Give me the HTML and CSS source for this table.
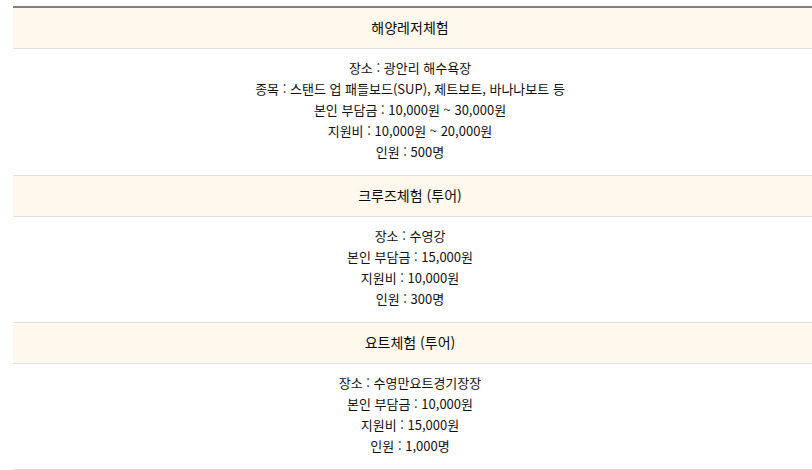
FILE: index.html
```html
<!DOCTYPE html>
<html lang="ko">
<head>
<meta charset="utf-8">
<link rel="stylesheet" href="styles.css">
</head>
<body>
<div class="wrap">
  <div class="board">
    <div class="head">해양레저체험</div>
    <div class="body">
      <p>장소 : 광안리 해수욕장</p>
      <p>종목 : 스탠드 업 패들보드(SUP), 제트보트, 바나나보트 등</p>
      <p>본인 부담금 : 10,000원 ~ 30,000원</p>
      <p>지원비 : 10,000원 ~ 20,000원</p>
      <p>인원 : 500명</p>
    </div>
    <div class="head">크루즈체험 (투어)</div>
    <div class="body">
      <p>장소 : 수영강</p>
      <p>본인 부담금 : 15,000원</p>
      <p>지원비 : 10,000원</p>
      <p>인원 : 300명</p>
    </div>
    <div class="head">요트체험 (투어)</div>
    <div class="body">
      <p>장소 : 수영만요트경기장장</p>
      <p>본인 부담금 : 10,000원</p>
      <p>지원비 : 15,000원</p>
      <p>인원 : 1,000명</p>
    </div>
  </div>
</div>
</body>
</html>
```
FILE: styles.css
```css
html, body {
  margin: 0;
  padding: 0;
  background: #fff;
}
body {
  font-family: "Noto Sans CJK KR", "Noto Sans", sans-serif;
  font-size: 13px;
  color: #111;
}
.wrap {
  padding: 6px 0 0 13px;
}
.board {
  border-top: 2px solid #808080;
}
.head {
  background: #fff8ec;
  height: 39px;
  line-height: 39px;
  padding-bottom: 1px;
  text-align: center;
  padding-right: 5px;
  border-bottom: 1px solid #e2e0dd;
  font-size: 14px;
  font-weight: 400;
  color: #0a0a0a;
}
.body {
  padding: 8px 5px 13px 0;
  border-bottom: 1px solid #e2e0dd;
  text-align: center;
}
.body p {
  margin: 0;
  line-height: 21px;
  height: 21px;
}
```
